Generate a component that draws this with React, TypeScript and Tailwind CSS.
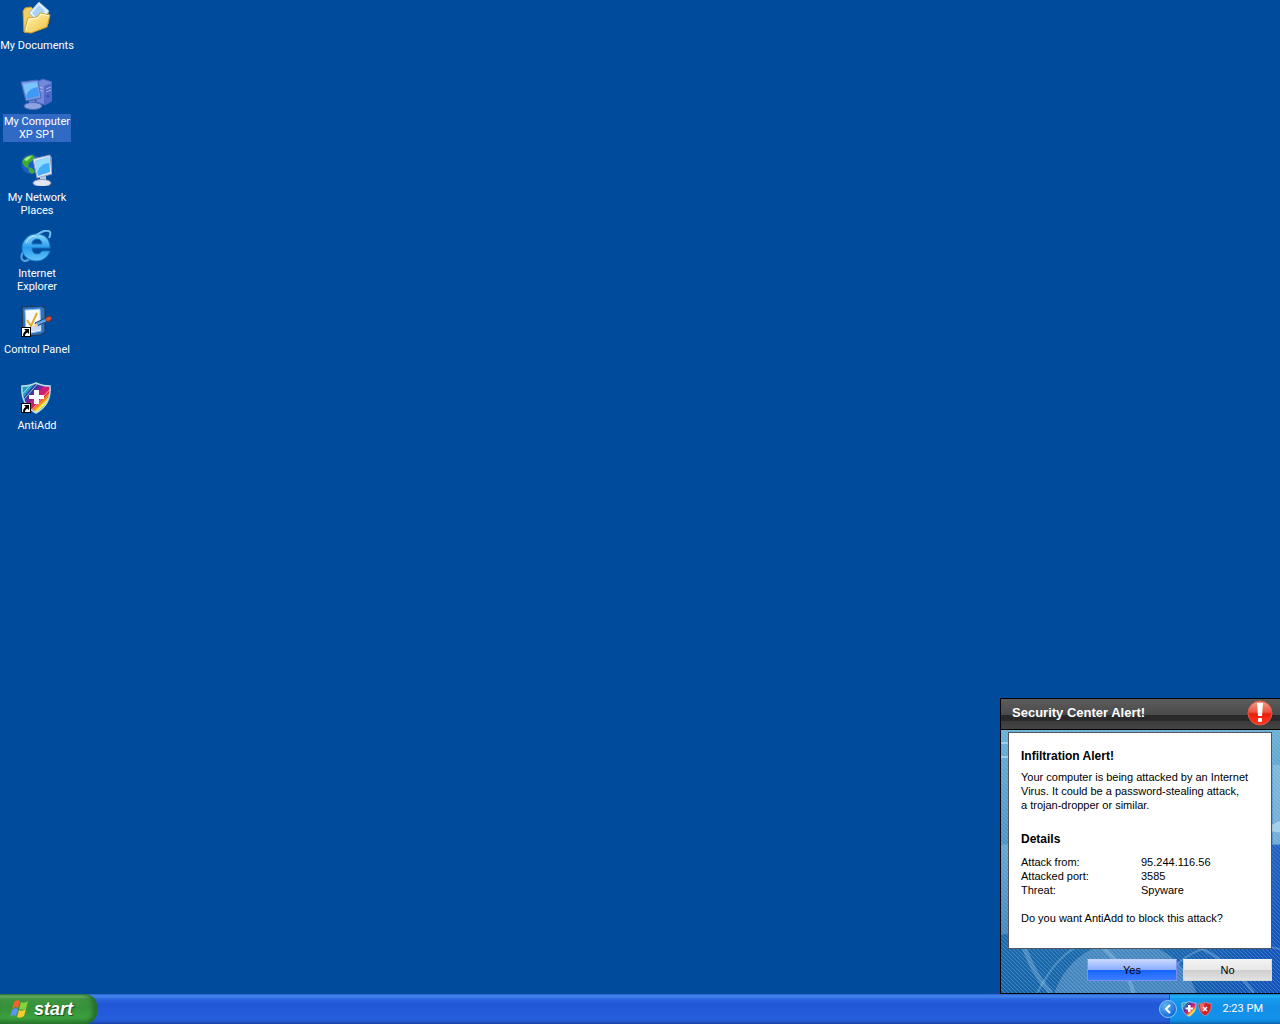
import type { ReactNode } from "react";

function ShortcutArrow() {
  return (
    <g>
      <rect x="1.500" y="21.500" width="9" height="9" fill="#fff" stroke="#000" />
      <path d="M4 23h5v5l-1.600-1.600c-1.800 1-2.400 2-2.400 3.600H3.200c-.5-2 .3-3.800 2.500-5.300z" fill="#000" />
    </g>
  );
}

function DocumentsIcon() {
  return (
    <svg viewBox="0 0 32 32" className="size-8" aria-hidden="true">
      <defs>
        <linearGradient id="folder" x1="0" y1="0" x2="1" y2="1">
          <stop offset="0" stopColor="#fff6b0" />
          <stop offset="1" stopColor="#f0c040" />
        </linearGradient>
      </defs>
      <path d="M3 9l2-3 6-1 2 2 15 3v12l-18 8-6 0z" fill="#f3cf5f" stroke="#c79a2c" strokeWidth="1" />
      <path d="M19 0l10 9-9 14L9 11z" fill="#e4f2ff" stroke="#8dbce8" />
      <path d="M19 3l6 6-6 10-7-8z" fill="#a9d3f8" />
      <path d="M4 30l4-14 9-1 3-4 10 2-3 12-16 6z" fill="url(#folder)" stroke="#d3a231" strokeWidth="1" />
      <path d="M6 28l3-11 9-1 3-4 8 2" fill="none" stroke="#fffbd8" strokeWidth="1" />
    </svg>
  );
}

function ComputerIcon() {
  return (
    <svg viewBox="0 0 32 32" className="size-8" aria-hidden="true">
      <path d="M16 4l7-3 9 3v19l-7 4-9-3z" fill="#7288d8" stroke="#4264bd" />
      <path d="M24 8l8-3v18l-8 4z" fill="#4f6acb" />
      <path d="M18 9l5 1M18 12l5 1M26 11l5-2M26 14l5-2" stroke="#9db2ea" />
      <circle cx="28" cy="18" r="1.500" fill="#3358b8" />
      <path d="M1 4l17-2 3 18-15 3z" fill="#8297e0" stroke="#4569c4" />
      <path d="M3 6l14-2 2 14-12 3z" fill="#3f9af5" />
      <path d="M3 6l14-2 1 5C11 10 8 13 6 18z" fill="#79c4fb" />
      <path d="M9 23l6-1 1 5-7 1z" fill="#7088cf" />
      <ellipse cx="13" cy="28" rx="9" ry="3.500" fill="#8ea2de" stroke="#4e6abd" />
    </svg>
  );
}

function NetworkIcon() {
  return (
    <svg viewBox="0 0 32 32" className="size-8" aria-hidden="true">
      <circle cx="11" cy="10" r="10" fill="#1c5cc8" stroke="#134d9c" />
      <path d="M2 8C4 3 8 1 13 1l2 3-3 3-3 2-1 5-3-1-2-3zM8 13l4 1 3 4-3 2-3-2z" fill="#3fae2f" />
      <path d="M4 6c2-3 5-4 8-4l-5 5z" fill="#b0e688" />
      <path d="M30 2l2 1v17l-4 1z" fill="#7b8bb5" />
      <path d="M13 5l17-4 2 19-15 4z" fill="#dfe6f6" stroke="#8b9ac4" />
      <path d="M15 7l14-4 1 15-12 4z" fill="#45aef8" />
      <path d="M15 7l14-4v6C23 9 19 13 17 19z" fill="#93dcff" />
      <path d="M20 23l6-1v6h-6z" fill="#bcc5de" />
      <ellipse cx="22" cy="29" rx="9" ry="3.500" fill="#e2e6f2" stroke="#8f99b9" />
    </svg>
  );
}

function ExplorerIcon() {
  return (
    <svg viewBox="0 0 32 32" className="size-8" aria-hidden="true">
      <defs>
        <linearGradient id="ie" x1="0" y1="0" x2="0" y2="1">
          <stop offset="0" stopColor="#8ddcff" />
          <stop offset=".5" stopColor="#2b9cec" />
          <stop offset="1" stopColor="#63c4fb" />
        </linearGradient>
      </defs>
      <path d="M4 20C-1 28 2 33 8 30c3-1 6-4 7-5" fill="none" stroke="#55a7e4" strokeWidth="2" />
      <path
        d="M16 4c9 0 14 5 14 14H12c0 4 2 6 5 6 2 0 4-1 5-3h8c-2 6-7 10-14 10C8 31 2 25 2 18S8 4 16 4zm-4 10h10c0-3-2-5-5-5s-5 2-5 5z"
        fill="url(#ie)"
        stroke="#1478c8"
        strokeWidth="1"
      />
      <path d="M8 13C13 6 19 3 24 1c6-1 8 1 5 7" fill="none" stroke="#71bcec" strokeWidth="2" />
      <path d="M6 13c2-5 6-7 10-7" fill="none" stroke="#c9f0ff" strokeWidth="1" />
    </svg>
  );
}

function ControlPanelIcon() {
  return (
    <svg viewBox="0 0 32 32" className="size-8" aria-hidden="true">
      <path d="M2 1l19-1 4 2v24l-5 3-17 1z" fill="#2a72c4" stroke="#26323f" />
      <path d="M5 4l15-1 1 22-15 3z" fill="#f5faff" stroke="#8fc0ee" />
      <path d="M7 26l13-13 1 11z" fill="#c7dcf4" />
      <path d="M7 14l4 6 6-13" fill="none" stroke="#e3ab2c" strokeWidth="2" />
      <path d="M15 17l11-5 2 3-11 5z" fill="#59a5e8" stroke="#17477c" strokeWidth="1" />
      <path d="M25 12l5-2 2 2-1 2-4 2z" fill="#d7503b" stroke="#713221" strokeWidth="1" />
      <path d="M14 19l3-2 1 3-4 1z" fill="#efd39b" />
      <ShortcutArrow />
    </svg>
  );
}

const SHIELD = "M16 1c4 2 9 3 14 3 1 12-3 21-14 27C5 25 1 16 2 4c5 0 10-1 14-3z";

function RainbowShield({ id, className, shortcut }: { id: string; className: string; shortcut?: boolean }) {
  return (
    <svg viewBox="0 0 32 32" className={className} aria-hidden="true">
      <defs>
        <clipPath id={id}>
          <path d={SHIELD} />
        </clipPath>
      </defs>
      <g clipPath={`url(#${id})`}>
        <rect width="32" height="32" fill="#1f9fc0" />
        <path d="M0 20L16 0h16v32H0z" fill="#2b3fa6" />
        <path d="M0 26L22 0h10v32H0z" fill="#7a2397" />
        <path d="M0 32L27 0h5v32z" fill="#c81f7b" />
        <path d="M5 32L32 3v29z" fill="#e8243f" />
        <path d="M8 32l24-24v24z" fill="#f08a22" />
        <path d="M11 32l21-20v20z" fill="#f4dd28" />
        <path d="M15 32l17-16v16z" fill="#43b649" />
        <path d="M20 32l12-11v11z" fill="#2a8fc4" />
        <path d="M0 15L13 0M0 22L19 0M8 32L32 5M14 32l18-18" stroke="#fff" strokeOpacity=".6" />
      </g>
      <path d={SHIELD} fill="none" stroke="#b9dce5" strokeWidth="1.500" />
      <path d="M14 8h5v5h5v4h-5v5h-5v-5H9v-4h5z" fill="#fff" />
      {shortcut && <ShortcutArrow />}
    </svg>
  );
}

function RedShield() {
  return (
    <svg viewBox="0 0 16 16" className="size-4" aria-hidden="true">
      <path d="M8 1c2 1 4 2 6 1 1 6-1 10-6 13C3 12 1 8 2 2c2 1 4 0 6-1z" fill="#cf202b" stroke="#a8929d" />
      <path d="M8 2c-2 1-3 1-5 1 0 4 0 6 2 8z" fill="#ee6a65" />
      <path d="M6 6l4 4M10 6l-4 4" stroke="#fff" strokeWidth="1.500" />
    </svg>
  );
}

function AlertIcon() {
  return (
    <svg viewBox="0 0 26 26" className="size-[26px]" aria-hidden="true">
      <defs>
        <linearGradient id="ball" x1="0" y1="0" x2="0" y2="1">
          <stop offset="0" stopColor="#f4a08f" />
          <stop offset=".45" stopColor="#ec5442" />
          <stop offset=".55" stopColor="#e6200f" />
          <stop offset="1" stopColor="#ff3a20" />
        </linearGradient>
      </defs>
      <circle cx="13" cy="13" r="12" fill="url(#ball)" stroke="#d9594b" />
      <path d="M10 3h6l-1 13h-4z" fill="#fff" />
      <rect x="11" y="18" width="4" height="4" rx="1" fill="#fff" />
    </svg>
  );
}

function WindowsFlag() {
  return (
    <svg viewBox="0 0 20 20" className="size-5" aria-hidden="true">
      <path d="M4 3c2-2 4-2 6-1L8 9C6 8 4 8 2 10z" fill="#f2622d" />
      <path d="M11 3c2 1 4 1 7-1l-2 8c-3 1-5 1-7 0z" fill="#8bd03c" />
      <path d="M2 11c2-2 4-2 6-1l-2 7c-2-1-4-1-6 1z" fill="#5c93f5" />
      <path d="M9 11c2 1 4 1 7-1l-2 7c-3 2-5 2-7 1z" fill="#fbcb2c" />
    </svg>
  );
}

function AlertBackdrop() {
  return (
    <svg
      viewBox="0 0 278 264"
      preserveAspectRatio="none"
      className="absolute inset-0 -z-10 size-full"
      aria-hidden="true"
    >
      <defs>
        <linearGradient id="sky" x1="0" y1="0" x2="0" y2="1">
          <stop offset="0" stopColor="#68afd3" />
          <stop offset=".4" stopColor="#4c93c5" />
          <stop offset=".75" stopColor="#1868ab" />
          <stop offset="1" stopColor="#1260a6" />
        </linearGradient>
        <linearGradient id="deep" x1="0" y1="0" x2="1" y2="0">
          <stop offset=".55" stopColor="#0b48bd" stopOpacity="0" />
          <stop offset="1" stopColor="#0b48bd" stopOpacity=".75" />
        </linearGradient>
        <pattern id="hatch" width="4" height="4" patternUnits="userSpaceOnUse">
          <path d="M0 0h1v1H0zM1 1h1v1H1zM2 2h1v1H2zM3 3h1v1H3z" fill="#b5dcf5" fillOpacity=".4" />
        </pattern>
      </defs>
      <rect width="278" height="264" fill="url(#sky)" />
      <rect y="115" width="278" height="149" fill="url(#deep)" />
      <circle cx="124" cy="286" r="74" fill="#9cc4e4" fillOpacity=".35" />
      <g fill="none" stroke="#b4dbf3" strokeOpacity=".3">
        <path d="M22 215c7 20 14 34 28 49" strokeWidth="5" />
        <path d="M36 264c12-22 22-37 42-48" strokeWidth="2" />
        <path d="M94 211c20 18 34 34 38 53" strokeWidth="4" />
        <path d="M180 211c24 8 50 24 72 53" strokeWidth="3" />
        <path d="M170 240c26-27 64-32 108-20" strokeWidth="2" />
      </g>
      <g fill="#c5e5f5" fillOpacity=".6">
        <path d="M0 12h8v2H0zM0 26h8v2H0zM270 95l8-4v12l-8-1z" />
        <path d="M271 35h7v80h-7z" fillOpacity=".3" />
        <path d="M0 115h8v90H0z" fillOpacity=".25" />
      </g>
      <rect width="278" height="264" fill="url(#hatch)" />
    </svg>
  );
}

function DesktopItem({ icon, children, selected }: { icon: ReactNode; children: ReactNode; selected?: boolean }) {
  return (
    <button
      type="button"
      className="flex h-[76px] w-full flex-col items-center gap-1 pt-0.5 text-[11px] leading-[13px] text-white"
    >
      <span className="mr-0.5">{icon}</span>
      <span className={selected ? "w-[68px] whitespace-nowrap bg-[#316ac5] py-px" : "whitespace-nowrap py-px"}>
        {children}
      </span>
    </button>
  );
}

const details = [
  ["Attack from:", "95.244.116.56"],
  ["Attacked port:", "3585"],
  ["Threat:", "Spyware"],
];

function SecurityAlert() {
  return (
    <section
      role="alertdialog"
      aria-labelledby="alert-title"
      className="flex w-[280px] flex-col self-end border border-r-0 border-black font-['Liberation_Sans',Arial,sans-serif] text-[11px] leading-[14px] text-black"
    >
      <header className="flex h-[31px] items-center justify-between border-b border-black bg-[linear-gradient(#5c5c5c_0,#4a4a4a_16px,#292929_16px,#292929_22px,#3c3c3c_22px,#444_100%)] pr-[7px] pb-0.5 pl-[11px]">
        <h1 id="alert-title" className="text-[13px] font-bold text-white">
          Security Center Alert!
        </h1>
        <AlertIcon />
      </header>
      <div className="relative isolate pt-0.5 pr-2 pb-3 pl-[7px]">
        <AlertBackdrop />
        <div className="h-[217px] border border-[#505560] bg-white px-3 pt-4">
          <h2 className="text-[12px] font-bold">Infiltration Alert!</h2>
          <p className="mt-[7px] whitespace-nowrap">
            Your computer is being attacked by an Internet
            <br />
            Virus. It could be a password-stealing attack,
            <br />a trojan-dropper or similar.
          </p>
          <h2 className="mt-5 text-[12px] font-bold">Details</h2>
          <dl className="mt-[9px] grid grid-cols-[120px_1fr]">
            {details.map(([label, value]) => (
              <div key={label} className="contents">
                <dt>{label}</dt>
                <dd>{value}</dd>
              </div>
            ))}
          </dl>
          <p className="mt-[14px]">Do you want AntiAdd to block this attack?</p>
        </div>
        <div className="mt-[10px] flex justify-end gap-1.5">
          <button
            type="button"
            className="h-[22px] w-[90px] border border-[#7c8ff5] border-t-[#c5d4ff] bg-[linear-gradient(#c5d6ff,#8caeff_50%,#1463ff_50%,#3d7eff)]"
          >
            Yes
          </button>
          <button
            type="button"
            className="h-[22px] w-[89px] border border-[#d8d8d8] border-t-[#f4f4f4] bg-[linear-gradient(#f2f2f2,#e8e8e8_50%,#cdcdcd_50%,#e2e2e2)]"
          >
            No
          </button>
        </div>
      </div>
    </section>
  );
}

function Taskbar() {
  return (
    <footer className="flex h-[30px] items-stretch bg-[linear-gradient(#2a5fd0_0,#4589f2_2px,#2c66e0_5px,#2157d7_10px,#245edb_24px,#235ad4_27px,#1941a5_30px)]">
      <button
        type="button"
        className="flex w-[97px] items-center gap-1 rounded-r-xl bg-[linear-gradient(#2f7a31_0,#74b874_2px,#3f9440_5px,#36923a_14px,#3ba03e_24px,#2a7a2c_30px)] pl-2.5 shadow-[inset_-4px_0_5px_#256b2c]"
      >
        <WindowsFlag />
        <span className="font-['Liberation_Sans',Arial,sans-serif] text-[18px] leading-5 font-bold text-white italic [text-shadow:1px_1px_1px_#1c4b1d]">
          start
        </span>
      </button>
      <div className="ml-auto flex items-center">
        <button
          type="button"
          aria-label="Show hidden icons"
          className="z-10 -mr-2 flex size-[18px] items-center justify-center rounded-full border border-[#8ac4f6] bg-[radial-gradient(circle_at_35%_30%,#5db5f5,#1a6fd6_70%)]"
        >
          <svg viewBox="0 0 10 10" className="size-2.5" aria-hidden="true">
            <path d="M7 1L3 5l4 4" fill="none" stroke="#fff" strokeWidth="2" />
          </svg>
        </button>
        <div className="flex h-full w-[111px] items-center border-l border-[#0e5ca8] bg-[linear-gradient(#1476cc_0,#24b5f5_2px,#149bee_5px,#1290e8_12px,#1491ea_24px,#108bdc_27px,#0d61ab_30px)] pl-[11px] text-[11px] text-white">
          <RainbowShield id="tray-shield" className="size-4" />
          <RedShield />
          <time className="ml-auto pr-[17px]">2:23 PM</time>
        </div>
      </div>
    </footer>
  );
}

export default function App() {
  return (
    <div className="flex min-h-screen flex-col bg-[#004b9c] font-[Roboto,'Noto_Sans',sans-serif]">
      <main className="flex flex-1 justify-between">
        <nav aria-label="Desktop" className="flex w-[74px] flex-col">
          <DesktopItem icon={<DocumentsIcon />}>My Documents</DesktopItem>
          <DesktopItem icon={<ComputerIcon />} selected>
            My Computer
            <br />
            XP SP1
          </DesktopItem>
          <DesktopItem icon={<NetworkIcon />}>
            My Network
            <br />
            Places
          </DesktopItem>
          <DesktopItem icon={<ExplorerIcon />}>
            Internet
            <br />
            Explorer
          </DesktopItem>
          <DesktopItem icon={<ControlPanelIcon />}>Control Panel</DesktopItem>
          <DesktopItem icon={<RainbowShield id="desktop-shield" className="size-8" shortcut />}>AntiAdd</DesktopItem>
        </nav>
        <SecurityAlert />
      </main>
      <Taskbar />
    </div>
  );
}
